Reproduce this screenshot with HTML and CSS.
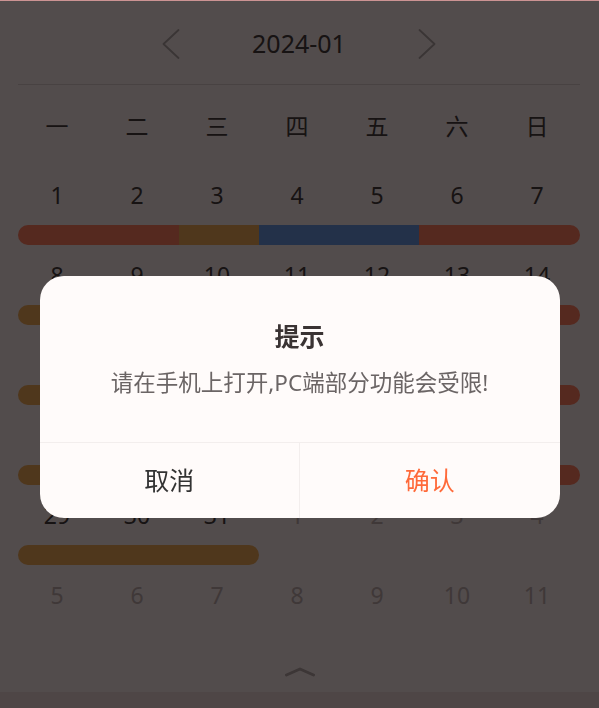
FILE: index.html
```html
<!DOCTYPE html>
<html lang="zh-CN">
<head>
<meta charset="utf-8">
<title>日历</title>
<link rel="stylesheet" href="styles.css">
</head>
<body>
<div class="page">
  <div class="cal">
    <div class="cal-head">
      <span class="nav-arrow"><svg width="18" height="30" viewBox="0 0 18 30"><path d="M16.5 1 L1.5 15 L16.5 29" fill="none" stroke="currentColor" stroke-width="1.8" stroke-linecap="round" stroke-linejoin="round"/></svg></span>
      <span class="month">2024-01</span>
      <span class="nav-arrow"><svg width="18" height="30" viewBox="0 0 18 30"><path d="M1.5 1 L16.5 15 L1.5 29" fill="none" stroke="currentColor" stroke-width="1.8" stroke-linecap="round" stroke-linejoin="round"/></svg></span>
    </div>
    <div class="weekdays">
      <span>一</span><span>二</span><span>三</span><span>四</span><span>五</span><span>六</span><span>日</span>
    </div>
    <div class="week">
      <div class="days"><span>1</span><span>2</span><span>3</span><span>4</span><span>5</span><span>6</span><span>7</span></div>
      <div class="bar"><i class="seg red s2"></i><i class="seg ochre s1"></i><i class="seg navy s2"></i><i class="seg red s2"></i></div>
    </div>
    <div class="week">
      <div class="days"><span>8</span><span>9</span><span>10</span><span>11</span><span>12</span><span>13</span><span>14</span></div>
      <div class="bar"><i class="seg ochre s3"></i><i class="seg navy s2"></i><i class="seg red s2"></i></div>
    </div>
    <div class="week">
      <div class="days"><span>15</span><span>16</span><span>17</span><span>18</span><span>19</span><span>20</span><span>21</span></div>
      <div class="bar"><i class="seg ochre s3"></i><i class="seg navy s2"></i><i class="seg red s2"></i></div>
    </div>
    <div class="week">
      <div class="days"><span>22</span><span>23</span><span>24</span><span>25</span><span>26</span><span>27</span><span>28</span></div>
      <div class="bar"><i class="seg ochre s3"></i><i class="seg navy s2"></i><i class="seg red s2"></i></div>
    </div>
    <div class="week">
      <div class="days"><span>29</span><span>30</span><span>31</span><span class="other">1</span><span class="other">2</span><span class="other">3</span><span class="other">4</span></div>
      <div class="bar"><i class="seg ochre s3 end"></i></div>
    </div>
    <div class="week">
      <div class="days"><span class="other">5</span><span class="other">6</span><span class="other">7</span><span class="other">8</span><span class="other">9</span><span class="other">10</span><span class="other">11</span></div>
      <div class="bar"></div>
    </div>
  </div>
  <div class="collapse">
    <svg width="30" height="10" viewBox="0 0 30 10"><path d="M1.5 8 L15 2 L28.5 8" fill="none" stroke="currentColor" stroke-width="3" stroke-linecap="round" stroke-linejoin="round"/></svg>
  </div>
  <div class="bottom-bar"></div>
</div>

<div class="mask"></div>
<div class="dialog-wrap">
  <div class="dialog">
    <div class="dialog-body">
      <div class="dialog-title">提示</div>
      <div class="dialog-msg">请在手机上打开,PC端部分功能会受限!</div>
    </div>
    <div class="dialog-foot">
      <button class="btn cancel">取消</button>
      <button class="btn confirm">确认</button>
    </div>
  </div>
</div>
</body>
</html>
```

FILE: styles.css
```css
* { box-sizing: border-box; }

html, body {
  margin: 0;
  padding: 0;
}

body {
  border-top: 1px solid #cc9393;
  background: #cdbebe;
  font-family: "Noto Sans", "Noto Sans CJK SC", sans-serif;
  color: #3a3030;
  height: 708px;
  overflow: hidden;
}

.page {
  display: flex;
  flex-direction: column;
}

.cal {
  padding: 0 19px 0 18px;
}

.cal-head {
  height: 84px;
  border-bottom: 1px solid #b4a5a5;
  display: flex;
  align-items: center;
  justify-content: center;
  gap: 72px;
}

.nav-arrow {
  display: flex;
  color: #918484;
  margin-top: 2px;
}

.month {
  font-size: 25px;
  line-height: 32px;
  color: #3a3030;
}

.weekdays,
.days {
  display: grid;
  grid-template-columns: repeat(7, 1fr);
  text-align: center;
  margin-left: -1px;
  margin-right: 3px;
}

.weekdays {
  margin-top: 21px;
  margin-bottom: 29px;
  font-size: 23px;
  line-height: 40px;
}

.week {
  display: flex;
  flex-direction: column;
  padding-bottom: 10px;
}

.days {
  font-size: 23px;
  line-height: 40px;
}

.days .other {
  color: #9d8c8c;
}

.bar {
  margin-top: 10px;
  height: 20px;
  display: grid;
  grid-template-columns: repeat(7, 1fr);
}

.seg {
  display: block;
  height: 20px;
}

.seg:first-child {
  border-radius: 10px 0 0 10px;
}

.seg:last-child {
  border-radius: 0 10px 10px 0;
}

.seg.end {
  border-radius: 10px;
}

.s1 { grid-column: span 1; }
.s2 { grid-column: span 2; }
.s3 { grid-column: span 3; }

.red { background: #d4664e; }
.ochre { background: #c58946; }
.navy { background: #577ab6; }

.collapse {
  height: 37px;
  padding-top: 12px;
  display: flex;
  justify-content: center;
  color: #968787;
}

.collapse svg {
  display: block;
}

.bottom-bar {
  height: 16px;
  background: #c3afaf;
}

.mask {
  position: fixed;
  top: 1px;
  left: 0;
  right: 0;
  bottom: 0;
  background: rgba(0, 0, 0, 0.6);
}

.dialog-wrap {
  position: fixed;
  top: 1px;
  left: 0;
  right: 0;
  bottom: 0;
  display: flex;
  justify-content: center;
  align-items: flex-start;
  padding-top: 275px;
}

.dialog {
  width: 520px;
  height: 242px;
  background: #fffbfa;
  border-radius: 24px;
  overflow: hidden;
  display: flex;
  flex-direction: column;
}

.dialog-body {
  padding-top: 44px;
  height: 166px;
  text-align: center;
}

.dialog-title {
  font-size: 25px;
  line-height: 32px;
  font-weight: 700;
  color: #3a3333;
}

.dialog-msg {
  margin-top: 15px;
  font-size: 22.5px;
  line-height: 32px;
  color: #6b6565;
}

.dialog-foot {
  flex: 1;
  display: flex;
  border-top: 1px solid #f3eeed;
}

.btn {
  flex: 1;
  border: 0;
  background: transparent;
  font-family: inherit;
  font-size: 25px;
  line-height: 75px;
  padding: 0;
  color: #333;
}

.btn.cancel {
  border-right: 1px solid #f3eeed;
}

.btn.confirm {
  color: #ff6a3a;
}
```
